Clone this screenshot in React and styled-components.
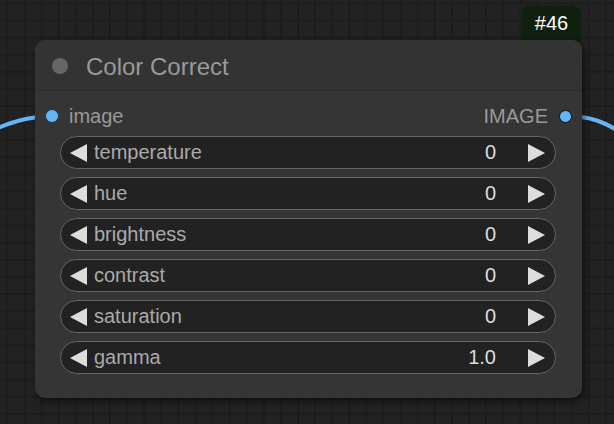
import React from "react";
import styled, { createGlobalStyle } from "styled-components";

const GlobalStyle = createGlobalStyle`
  html, body {
    margin: 0;
    padding: 0;
    width: 100%;
    height: 100%;
    overflow: hidden;
    background: #222;
  }
  #root {
    height: 100%;
  }
`;

const widgets = [
  { name: "temperature", value: "0" },
  { name: "hue", value: "0" },
  { name: "brightness", value: "0" },
  { name: "contrast", value: "0" },
  { name: "saturation", value: "0" },
  { name: "gamma", value: "1.0" },
];

function App() {
  return (
    <>
      <GlobalStyle />
      <Canvas>
        <Links width="614" height="424" viewBox="0 0 614 424">
          <path d="M -10 131 C 12 122, 26 117, 52 116" />
          <path d="M 566 116 C 590 116, 606 122, 626 136" />
        </Links>
        <Badge>#46</Badge>
        <Node>
          <TitleBar>
            <TitleDot />
            <TitleText>Color Correct</TitleText>
          </TitleBar>
          <Body>
            <SlotRow>
              <Slot>
                <SlotDot />
                <SlotLabel>image</SlotLabel>
              </Slot>
              <Slot>
                <SlotLabel>IMAGE</SlotLabel>
                <SlotDot outlined />
              </Slot>
            </SlotRow>
            <WidgetList>
              {widgets.map((w) => (
                <Widget key={w.name}>
                  <Arrow viewBox="0 0 17 18">
                    <polygon points="17,0 17,18 0,9" />
                  </Arrow>
                  <WidgetLabel>{w.name}</WidgetLabel>
                  <WidgetValue>{w.value}</WidgetValue>
                  <Arrow viewBox="0 0 17 18">
                    <polygon points="0,0 0,18 17,9" />
                  </Arrow>
                </Widget>
              ))}
            </WidgetList>
          </Body>
        </Node>
      </Canvas>
    </>
  );
}

const Canvas = styled.div`
  position: relative;
  width: 614px;
  height: 424px;
  overflow: hidden;
  background-color: #222222;
  background-image: linear-gradient(
      to right,
      #1c1c1c 0px,
      #1c1c1c 2px,
      transparent 2px
    ),
    linear-gradient(to bottom, #1c1c1c 0px, #1c1c1c 2px, transparent 2px);
  background-size: 17.1px 17.1px;
  background-position: 6.5px 2.5px;
  font-family: "Liberation Sans", Arial, sans-serif;
`;

const Links = styled.svg`
  position: absolute;
  left: 0;
  top: 0;
  path {
    fill: none;
    stroke: #64b5f6;
    stroke-width: 4;
  }
`;

const Badge = styled.div`
  position: absolute;
  left: 522px;
  top: 6px;
  width: 59px;
  height: 36px;
  box-sizing: border-box;
  padding-top: 6px;
  border-radius: 8px 8px 0 0;
  background: #0f200f;
  color: #fff;
  font-size: 20px;
  text-align: center;
`;

const Node = styled.div`
  position: absolute;
  left: 35px;
  top: 40px;
  width: 547px;
  height: 358px;
  border-radius: 10px;
  background: #353535;
  box-shadow: 2px 3px 6px rgba(0, 0, 0, 0.55);
  display: flex;
  flex-direction: column;
`;

const TitleBar = styled.div`
  height: 51px;
  box-sizing: border-box;
  display: flex;
  align-items: center;
  padding-left: 17px;
  gap: 18px;
  background: #333;
  border-radius: 10px 10px 0 0;
  border-bottom: 1px solid #2a2a2a;
`;

const TitleDot = styled.div`
  width: 16px;
  height: 16px;
  border-radius: 50%;
  background: #666;
  margin-top: 2px;
`;

const TitleText = styled.div`
  color: #999;
  font-size: 24px;
  margin-top: 3px;
`;

const Body = styled.div`
  display: flex;
  flex-direction: column;
  padding: 13px 0 0;
`;

const SlotRow = styled.div`
  height: 24px;
  display: flex;
  align-items: center;
  justify-content: space-between;
  padding: 0 10px 0 11px;
`;

const Slot = styled.div`
  display: flex;
  align-items: center;
  gap: 11px;
`;

const SlotDot = styled.div`
  width: 12px;
  height: 12px;
  box-sizing: border-box;
  border-radius: 50%;
  background: #64b5f6;
  border: ${(p) => (p.outlined ? "1.5px solid #111" : "none")};
  ${(p) => (p.outlined ? "width: 13px; height: 13px;" : "")}
`;

const SlotLabel = styled.span`
  color: #999;
  font-size: 20px;
`;

const WidgetList = styled.div`
  display: flex;
  flex-direction: column;
  gap: 8px;
  padding: 8px 26px 0 25px;
`;

const Widget = styled.div`
  height: 33px;
  box-sizing: border-box;
  border: 1.5px solid #666;
  border-radius: 17px;
  background: #222;
  display: flex;
  align-items: center;
  padding: 0 10px 0 9px;
`;

const Arrow = styled.svg`
  width: 17px;
  height: 18px;
  flex: none;
  fill: #ddd;
`;

const WidgetLabel = styled.span`
  flex: 1;
  margin-left: 7px;
  color: #aaa;
  font-size: 20px;
`;

const WidgetValue = styled.span`
  color: #ddd;
  font-size: 20px;
  margin-right: 32px;
`;

export default App;
